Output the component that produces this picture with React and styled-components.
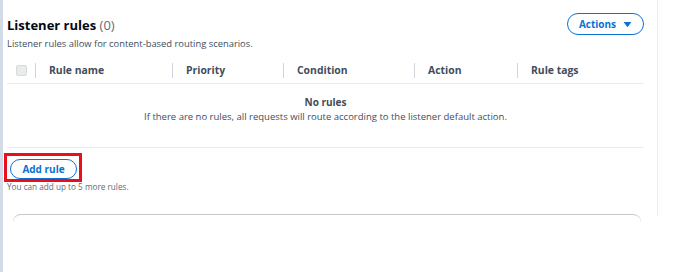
import React from 'react'
import styled, { createGlobalStyle } from 'styled-components'

const GlobalStyle = createGlobalStyle`
  html, body {
    margin: 0;
    padding: 0;
    background: #fff;
  }
  body {
    font-family: "Open Sans", "Noto Sans", sans-serif;
    color: #000716;
  }
`

const columns = ['Rule name', 'Priority', 'Condition', 'Action', 'Rule tags']
const colWidths = [137, 111, 131, 103, 127]

function App() {
  return (
    <Page>
      <GlobalStyle />
      <SideStrip />
      <Panel>
        <Header>
          <TitleBlock>
            <Title>
              Listener rules <Count>(0)</Count>
            </Title>
            <Description>Listener rules allow for content-based routing scenarios.</Description>
          </TitleBlock>
          <PillButton>
            Actions
            <Caret viewBox="0 0 10 8">
              <path d="M0.5 1 H9.5 L5 7 Z" fill="currentColor" />
            </Caret>
          </PillButton>
        </Header>

        <Table>
          <HeadRow>
            <CheckCell>
              <CheckBox />
            </CheckCell>
            {columns.map((c, i) => (
              <HeadCell key={c} $w={colWidths[i]}>
                {c}
              </HeadCell>
            ))}
          </HeadRow>
          <Empty>
            <EmptyTitle>No rules</EmptyTitle>
            <EmptyText>
              If there are no rules, all requests will route according to the listener default action.
            </EmptyText>
          </Empty>
        </Table>

        <Footer>
          <Highlight>
            <AddButton>Add rule</AddButton>
          </Highlight>
          <Hint>You can add up to 5 more rules.</Hint>
        </Footer>

        <NextCard />
      </Panel>
    </Page>
  )
}

export default App

const Page = styled.div`
  display: flex;
  align-items: flex-start;
  width: 698px;
  height: 272px;
  overflow: hidden;
`

const SideStrip = styled.div`
  width: 3px;
  height: 272px;
  flex-shrink: 0;
  background: #d3dbe8;
`

const Panel = styled.div`
  width: 655px;
  height: 216px;
  border-right: 1px solid #eaedf0;
  padding: 0 13px 0 4px;
  box-sizing: border-box;
  display: flex;
  flex-direction: column;
`

const Header = styled.div`
  display: flex;
  justify-content: space-between;
  align-items: flex-start;
  padding-top: 13px;
`

const TitleBlock = styled.div`
  display: flex;
  flex-direction: column;
  margin-top: 2px;
`

const Title = styled.h2`
  margin: 0;
  font-size: 13px;
  line-height: 20px;
  font-weight: 700;
  color: #000716;
`

const Count = styled.span`
  font-weight: 400;
  color: #5f6b7a;
`

const Description = styled.p`
  margin: 2px 0 0;
  font-size: 9.4px;
  line-height: 13px;
  color: #414d5c;
`

const PillButton = styled.button`
  display: flex;
  align-items: center;
  justify-content: center;
  gap: 7px;
  width: 77px;
  height: 22px;
  border: 1.5px solid #0972d3;
  border-radius: 12px;
  background: #fff;
  color: #0972d3;
  font-family: inherit;
  font-size: 10px;
  font-weight: 700;
  padding: 0;
  cursor: pointer;
`

const Caret = styled.svg`
  width: 9px;
  height: 7px;
`

const Table = styled.div`
  margin-top: 7px;
  display: flex;
  flex-direction: column;
`

const HeadRow = styled.div`
  display: flex;
  align-items: center;
  height: 26px;
  border-bottom: 1px solid #e9ebed;
`

const CheckCell = styled.div`
  width: 28px;
  display: flex;
  justify-content: flex-start;
  padding-left: 9px;
  box-sizing: border-box;
`

const CheckBox = styled.span`
  width: 11px;
  height: 11px;
  border-radius: 2px;
  background: #e9ebed;
  border: 1px solid #d5dbdb;
  box-sizing: border-box;
`

const HeadCell = styled.div`
  width: ${(p) => p.$w}px;
  box-sizing: border-box;
  border-left: 1px solid #d1d5db;
  padding-left: 13px;
  font-size: 10.4px;
  line-height: 15px;
  font-weight: 700;
  color: #414d5c;
`

const Empty = styled.div`
  height: 64px;
  border-bottom: 1px solid #e9ebed;
  display: flex;
  flex-direction: column;
  align-items: center;
  padding-top: 11px;
  box-sizing: border-box;
`

const EmptyTitle = styled.div`
  font-size: 10px;
  line-height: 14px;
  font-weight: 700;
  color: #414d5c;
`

const EmptyText = styled.div`
  margin-top: 1px;
  font-size: 9.5px;
  line-height: 14px;
  color: #414d5c;
`

const Footer = styled.div`
  display: flex;
  flex-direction: column;
  align-items: flex-start;
  margin-top: 5px;
`

const Highlight = styled.div`
  margin-left: -3px;
  border: 3px solid #e8101c;
  padding: 3px 2px 0 3px;
`

const AddButton = styled.button`
  display: block;
  width: 67px;
  height: 20px;
  border: 1.5px solid #0972d3;
  border-radius: 12px;
  background: #fff;
  color: #0972d3;
  font-family: inherit;
  font-size: 10px;
  font-weight: 700;
  padding: 0;
  cursor: pointer;
`

const Hint = styled.div`
  font-size: 8.2px;
  line-height: 10px;
  color: #5f6b7a;
  margin-top: 0;
`

const NextCard = styled.div`
  margin: 22px 3px 0 6px;
  height: 8px;
  flex-shrink: 0;
  border-top: 1px solid #c6c6cd;
  border-radius: 8px 8px 0 0;
`
